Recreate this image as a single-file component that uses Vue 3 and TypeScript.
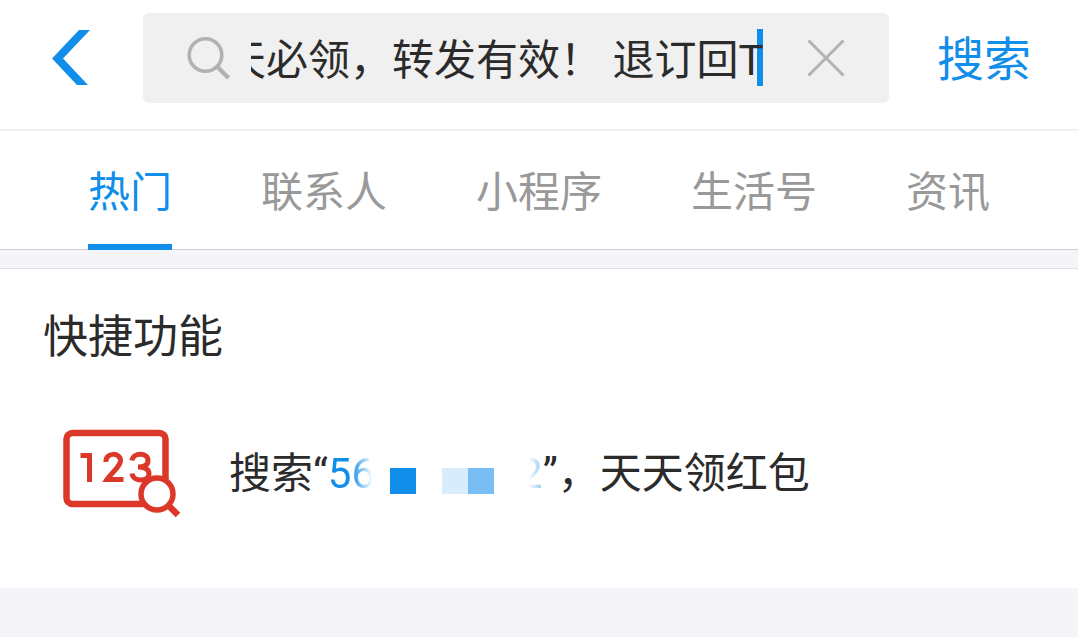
<script setup lang="ts">
import { onMounted, ref } from 'vue'

const tabs: string[] = ['热门', '联系人', '小程序', '生活号', '资讯']
const active = ref(0)
const query = ref('天天必领，转发有效！ 退订回T')
const field = ref<HTMLInputElement | null>(null)

onMounted(() => {
  if (field.value) field.value.scrollLeft = field.value.scrollWidth
})
</script>

<template>
  <div class="page">
    <header class="header">
      <button class="back" type="button" aria-label="返回">
        <svg width="40" height="56" viewBox="0 0 40 56"><path d="M27 0H38L11 28.5L36 55H25L0 28.5Z" fill="#108ee9" /></svg>
      </button>
      <div class="search">
        <svg class="glass" width="44" height="44" viewBox="0 0 44 44" fill="none" stroke="#b2b2b2">
          <circle cx="18.500" cy="19" r="16.3" stroke-width="3.6" />
          <path d="M30 30.500L41.500 42" stroke-width="4.4" />
        </svg>
        <div class="field">
          <span class="caret"></span>
          <input ref="field" v-model="query" type="text" aria-label="搜索内容" />
        </div>
        <button class="clear" type="button" aria-label="清除">
          <svg width="38" height="38" viewBox="0 0 38 38"><path d="M1.5 1.5L36.5 36.5M36.5 1.5L1.5 36.5" stroke="#b2b2b2" stroke-width="3" /></svg>
        </button>
      </div>
      <button class="submit" type="button">搜索</button>
    </header>

    <nav class="tabs">
      <button
        v-for="(tab, i) in tabs"
        :key="tab"
        type="button"
        class="tab"
        :class="{ active: i === active }"
        @click="active = i"
      >{{ tab }}</button>
    </nav>

    <section class="panel">
      <h2>快捷功能</h2>
      <a class="item" href="#">
        <svg class="icon" width="120" height="92" viewBox="0 0 120 92" fill="none" stroke="#dc3829">
          <rect x="4.5" y="5" width="99" height="71" rx="6" stroke-width="6.5" />
          <g stroke-width="5">
            <path d="M18.500 27.500H28M27.500 25V54" />
            <path d="M44 34C43 24 59 24 58.500 33C58 39 50 44 45 51.500H61.500" />
            <path d="M70 32.500C71 24 86 24 86 32.500C86 38 81 39 76 39C83 39 87 41 87 46C87 54 71 54 70 45.500" />
          </g>
          <circle cx="95" cy="66" r="16" stroke-width="5.5" fill="#fff" />
          <path d="M106 77L116 87" stroke-width="6.5" />
        </svg>
        <span class="label">搜索“<span class="number"><span class="head">56</span><span class="mosaic"><i class="b1"></i><i class="b2"></i><i class="b3"></i></span><span class="tail">2</span></span>”，天天领红包</span>
      </a>
    </section>
  </div>
</template>

<style>
html,
body {
  background: #f4f4f9;
}
</style>

<style scoped>
.page {
  font-family: Roboto, "Noto Sans CJK SC", sans-serif;
  font-size: 42px;
  color: #2b2b2b;
}
button {
  border: 0;
  padding: 0;
  background: none;
  font: inherit;
  cursor: pointer;
}
svg {
  display: block;
}
.header {
  display: flex;
  align-items: center;
  box-sizing: border-box;
  height: 131px;
  padding: 0 47px 14px 52px;
  background: #fff;
  border-bottom: 2px solid #f1f1f2;
}
.back {
  width: 91px;
}
.search {
  flex: 1;
  min-width: 0;
  display: flex;
  align-items: center;
  height: 90px;
  box-sizing: border-box;
  padding: 0 44px;
  border-radius: 6px;
  background: #f0f0f0;
}
.glass {
  flex: none;
  margin-right: 20px;
}
.field {
  position: relative;
  flex: 1;
  min-width: 0;
}
.field input {
  position: relative;
  display: block;
  box-sizing: border-box;
  width: 100%;
  height: 60px;
  padding: 0 0 2px;
  border: 0;
  outline: 0;
  background: none;
  font: inherit;
  color: inherit;
}
.caret {
  position: absolute;
  right: 0;
  top: 1px;
  width: 6px;
  height: 57px;
  background: #108ee9;
}
.clear {
  flex: none;
  margin-left: 44px;
}
.submit {
  margin-left: 48px;
  padding-top: 4px;
  font-size: 47px;
  line-height: 60px;
  color: #108ee9;
}
.tabs {
  display: flex;
  justify-content: space-between;
  padding: 0 88px;
  background: #fff;
  border-bottom: 1px solid #cfcfda;
}
.tab {
  height: 119px;
  margin-bottom: -1px;
  box-sizing: border-box;
  padding-top: 2px;
  border-bottom: 6px solid transparent;
  color: #999;
}
.tab.active {
  color: #108ee9;
  border-color: #108ee9;
}
.panel {
  margin-top: 18px;
  padding: 36px 43px 68px;
  background: #fff;
  border-top: 1px solid #dedee4;
}
h2 {
  margin: 0 0 57px;
  font-size: 45px;
  font-weight: 400;
  line-height: 66px;
}
.item {
  display: flex;
  align-items: center;
  padding-left: 19px;
  color: inherit;
  text-decoration: none;
}
.icon {
  flex: none;
  margin-right: 47px;
}
.label {
  display: flex;
  align-items: center;
  line-height: 64px;
  white-space: nowrap;
}
.number {
  display: flex;
  align-items: center;
  color: #108ee9;
}
.head {
  background: linear-gradient(90deg, #108ee9 50%, #fff 94%);
  background-clip: text;
  color: transparent;
}
.mosaic {
  display: flex;
  width: 129px;
  padding: 14px 0 0 15px;
}
.mosaic i {
  width: 26px;
  height: 26px;
}
.b1 {
  background: #108ee9;
  margin-right: 26px;
}
.b2 {
  background: #d9ecfc;
}
.b3 {
  background: #78bdf4;
}
.tail {
  background: linear-gradient(90deg, #fff 40%, #8ac7f4 100%);
  background-clip: text;
  color: transparent;
}
</style>
